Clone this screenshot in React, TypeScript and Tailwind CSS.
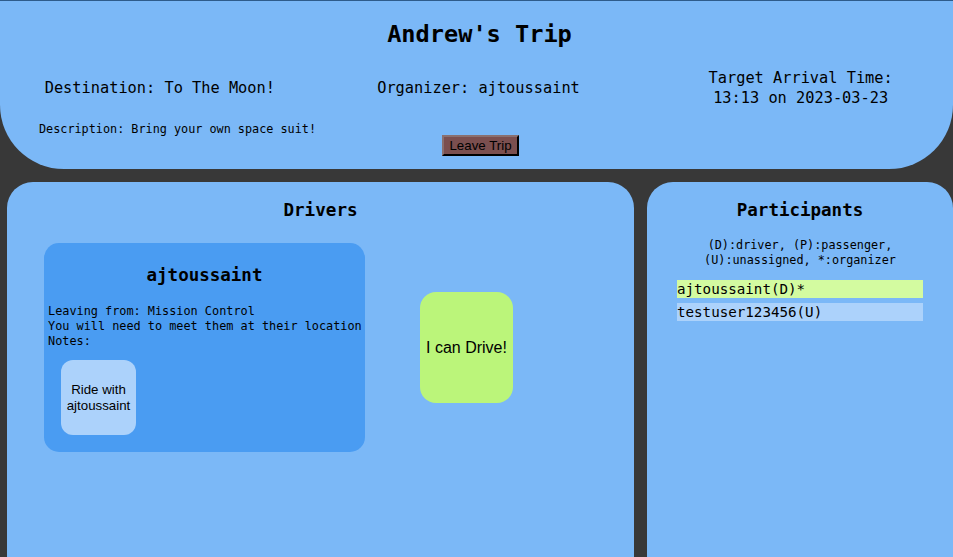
import React from "react";

const mono = { fontFamily: '"DejaVu Sans Mono", "Liberation Mono", monospace' };

export default function App() {
  return (
    <div className="min-h-[557px] w-[953px] bg-[#383838] overflow-hidden" style={mono}>
      <header className="h-[169px] border-t border-[#2e5b8a] bg-[#7bb8f7] rounded-b-[64px] text-black flex flex-col">
        <h1 className="text-center font-bold text-[23.6px] leading-[28px] mt-[19px] pl-[6px]">Andrew's Trip</h1>
        <div className="grid grid-cols-3 mt-[20px] text-[15.3px] leading-[20px] text-center">
          <div className="flex items-center justify-center pl-[2px]">Destination: To The Moon!</div>
          <div className="flex items-center justify-center pl-[4px]">Organizer: ajtoussaint</div>
          <div className="flex flex-col items-center justify-center pl-[13px]">
            <span>Target Arrival Time:</span>
            <span>13:13 on 2023-03-23</span>
          </div>
        </div>
        <div className="pl-[39px] mt-[14px] text-[11.8px] leading-[14px]">Description: Bring your own space suit!</div>
        <div className="flex justify-center mt-[-1px] pl-[8px]">
          <button
            className="h-[21px] w-[77px] bg-[#7b4f4f] text-[13.3px] leading-[16px] text-black border-2 border-t-[#8a7070] border-l-[#8a7070] border-r-black border-b-black"
            style={{ fontFamily: '"Liberation Sans", Arial, sans-serif' }}
          >
            Leave Trip
          </button>
        </div>
      </header>
      <div className="flex gap-[13px] pl-[7px] mt-[13px]">
        <section className="w-[627px] h-[400px] bg-[#7bb8f7] rounded-t-[26px] flex flex-col">
          <h2 className="text-center font-bold text-[17.6px] leading-[22px] mt-[17px]">Drivers</h2>
          <div className="flex items-center mt-[22px] pl-[37px] gap-[55px]">
            <div className="w-[321px] h-[209px] bg-[#4a9cf2] rounded-[15px] flex flex-col">
              <h3 className="text-center font-bold text-[17.5px] leading-[22px] mt-[21px]">ajtoussaint</h3>
              <div className="pl-[4px] mt-[18px] text-[11.85px] leading-[15px]">
                <div>Leaving from: Mission Control</div>
                <div>You will need to meet them at their location</div>
                <div>Notes:</div>
              </div>
              <button
                className="ml-[17px] mt-[11px] w-[75px] h-[75px] bg-[#acd2fb] rounded-[12px] text-[13.3px] leading-[15.5px] text-black"
                style={{ fontFamily: '"Liberation Sans", Arial, sans-serif' }}
              >
                Ride with<br />ajtoussaint
              </button>
            </div>
            <button
              className="w-[93px] h-[111px] bg-[#bbf57a] rounded-[16px] text-[16px] text-black"
              style={{ fontFamily: '"Liberation Sans", Arial, sans-serif' }}
            >
              I can Drive!
            </button>
          </div>
        </section>
        <section className="w-[306px] h-[400px] bg-[#7bb8f7] rounded-t-[26px] flex flex-col">
          <h2 className="text-center font-bold text-[17.5px] leading-[22px] mt-[17px]">Participants</h2>
          <div className="text-center text-[11.8px] leading-[15px] mt-[17px]">
            <div>(D):driver, (P):passenger,</div>
            <div>(U):unassigned, *:organizer</div>
          </div>
          <div className="flex flex-col gap-[5px] mt-[12px] px-[30px]">
            <div className="h-[18px] bg-[#d3fba0] text-[14.2px] leading-[18px]">ajtoussaint(D)*</div>
            <div className="h-[18px] bg-[#acd2fb] text-[14.2px] leading-[18px]">testuser123456(U)</div>
          </div>
        </section>
      </div>
    </div>
  );
}
